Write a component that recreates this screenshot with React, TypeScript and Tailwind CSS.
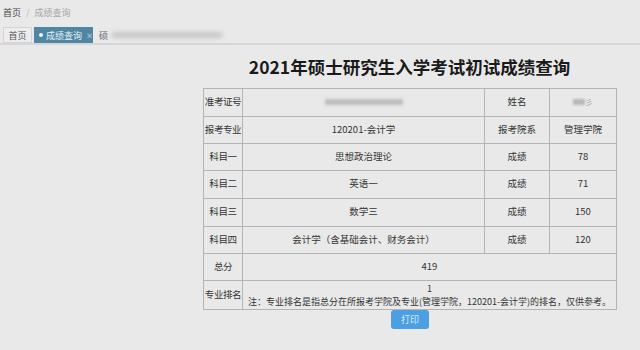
import React from "react";

const font = { fontFamily: '"Noto Sans CJK SC", "Noto Sans", sans-serif' };

function Cell({ children, className = "" }: { children?: React.ReactNode; className?: string }) {
  return (
    <td className={`border border-[#b4b4b4] text-center align-middle text-[9.5px] leading-none whitespace-nowrap text-[#333] p-0 ${className}`}>
      {children}
    </td>
  );
}

function Label({ children }: { children: React.ReactNode }) {
  return (
    <td className="border border-[#b4b4b4] text-center align-middle text-[9.5px] leading-none whitespace-nowrap text-[#333] p-0 tracking-[-0.4px] overflow-hidden">
      {children}
    </td>
  );
}

export default function App() {
  return (
    <div className="w-[640px] h-[350px] bg-[#e9e9e9] overflow-hidden relative whitespace-nowrap" style={font}>
      {/* breadcrumb */}
      <div className="h-[24px] flex items-center pl-[3px] text-[9px] leading-none">
        <span className="text-[#444]">首页</span>
        <span className="text-[#b5b5b5] mx-[5px]">/</span>
        <span className="text-[#a8a8a8]">成绩查询</span>
      </div>
      {/* tabs */}
      <div className="h-[21px] flex items-start border-b-2 border-[#d6d6d6] pl-[3px] pt-[3px] gap-[2px]">
        <div className="h-[16px] w-[29px] flex items-center justify-center border border-[#d4d4d4] bg-[#ededed] text-[9px] leading-none text-[#555]">首页</div>
        <div className="h-[16px] w-[59px] flex items-center gap-[3px] pl-[5px] bg-[#4f86a3] text-[9px] leading-none text-[#e8f0f4]">
          <span className="w-[4px] h-[4px] rounded-full bg-[#f2f6f8] shrink-0"></span>
          <span>成绩查询</span>
          <span className="text-[7px] ml-[1px]">×</span>
        </div>
        <div className="h-[16px] flex items-center pl-[4px] text-[9px] leading-none text-[#666]">
          <span>硕</span>
          <div className="ml-[4px] h-[6px] w-[110px] bg-[#c8c8c8] blur-[2px]"></div>
        </div>
      </div>

      {/* title */}
      <div className="ml-[203px] w-[413px] text-center mt-[13px]">
        <h1 className="text-[17.5px] font-bold text-[#1a1a1a] leading-none">2021年硕士研究生入学考试初试成绩查询</h1>
      </div>

      {/* table */}
      <div className="ml-[203px] mt-[12px] w-[413px]">
        <table className="w-[413px] border-collapse table-fixed">
          <colgroup>
            <col className="w-[39px]" />
            <col className="w-[242px]" />
            <col className="w-[65px]" />
            <col className="w-[67px]" />
          </colgroup>
          <tbody>
            <tr className="h-[28px]">
              <Label>准考证号</Label>
              <Cell>
                <div className="mx-auto w-[78px] h-[6px] bg-[#bdbdbd] blur-[1.5px]"></div>
              </Cell>
              <Cell>姓名</Cell>
              <Cell>
                <div className="flex items-center justify-center">
                  <div className="w-[12px] h-[6px] bg-[#b8b8b8] blur-[1px]"></div>
                  <span className="text-[#aaa] text-[8px]">彡</span>
                </div>
              </Cell>
            </tr>
            <tr className="h-[27px]">
              <Label>报考专业</Label>
              <Cell>120201-会计学</Cell>
              <Cell>报考院系</Cell>
              <Cell>管理学院</Cell>
            </tr>
            <tr className="h-[27px]">
              <Label>科目一</Label>
              <Cell>思想政治理论</Cell>
              <Cell>成绩</Cell>
              <Cell>78</Cell>
            </tr>
            <tr className="h-[28px]">
              <Label>科目二</Label>
              <Cell>英语一</Cell>
              <Cell>成绩</Cell>
              <Cell>71</Cell>
            </tr>
            <tr className="h-[28px]">
              <Label>科目三</Label>
              <Cell>数学三</Cell>
              <Cell>成绩</Cell>
              <Cell>150</Cell>
            </tr>
            <tr className="h-[27px]">
              <Label>科目四</Label>
              <Cell>会计学（含基础会计、财务会计）</Cell>
              <Cell>成绩</Cell>
              <Cell>120</Cell>
            </tr>
            <tr className="h-[27px]">
              <Label>总分</Label>
              <td colSpan={3} className="border border-[#b4b4b4] text-center align-middle text-[9.5px] leading-none text-[#333] p-0">419</td>
            </tr>
            <tr className="h-[29px]">
              <Label>专业排名</Label>
              <td colSpan={3} className="border border-[#b4b4b4] text-center align-middle text-[9px] text-[#333] p-0 leading-[13px] whitespace-nowrap">
                <div>1</div>
                <div>注：专业排名是指总分在所报考学院及专业(管理学院，120201-会计学)的排名，仅供参考。</div>
              </td>
            </tr>
          </tbody>
        </table>
      </div>

      {/* print button */}
      <div className="ml-[391px] w-[38px] h-[19px] rounded-[3px] bg-[#4c9fe3] flex items-center justify-center text-[9px] leading-none text-[#dcebf8]">
        打印
      </div>
    </div>
  );
}
